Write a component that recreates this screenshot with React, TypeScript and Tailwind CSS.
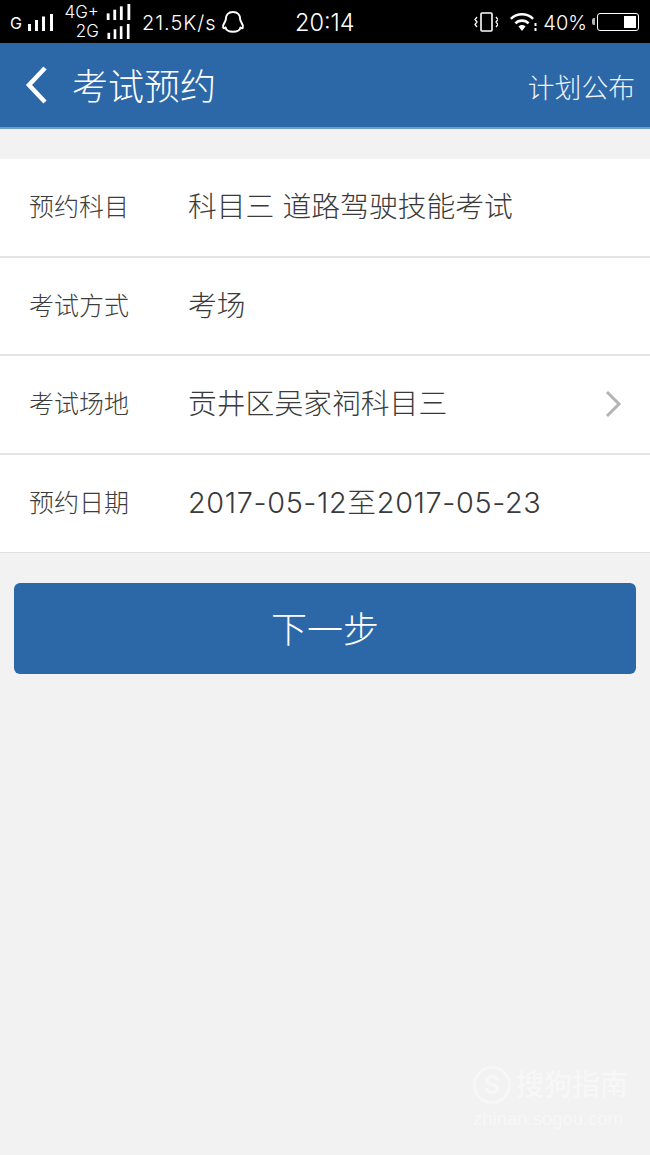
const font = { fontFamily: 'Inter, "Noto Sans CJK SC", sans-serif' };

function Bars({ className }: { className?: string }) {
  // signal strength bars, rising left to right
  return (
    <svg width="25" height="17" viewBox="0 0 25 17" className={className} fill="white">
      <rect x="0" y="10" width="3" height="7" />
      <rect x="7" y="6" width="3" height="11" />
      <rect x="14" y="2.5" width="3" height="14.5" />
      <rect x="22" y="0" width="3" height="17" />
    </svg>
  );
}

function Qq() {
  return (
    <svg width="24" height="24" viewBox="0 0 24 24" fill="none" stroke="white" strokeWidth="2" strokeLinejoin="round">
      <path d="M12 2c-4.800 0-7.200 3.300-7.200 7.200 0 1.300-.5 2.200-1.300 3.400-1 1.500-1.800 3.200-1.300 5 .3 1 1.100.8 2.300-.2.300 2.200 3 4.400 7.500 4.400s7.200-2.200 7.500-4.400c1.200 1 2 1.200 2.300.2.500-1.800-.3-3.500-1.300-5-.8-1.200-1.300-2.100-1.300-3.400C19.200 5.300 16.800 2 12 2z" />
    </svg>
  );
}

function StatusBar() {
  return (
    <div className="h-[43px] bg-black text-white flex items-center" style={font}>
      <div className="flex items-center w-[295px] pl-[10px]">
        <span className="text-[16px] leading-none mr-[6px] mt-[3px]">G</span>
        <Bars className="mt-[1px]" />
        <div className="ml-[10px] w-[68px] flex flex-col items-end">
          <div className="flex items-center gap-[7px] h-[19px]">
            <span className="text-[17px] leading-none font-light">4G+</span>
            <Bars className="h-[16px]" />
          </div>
          <div className="flex items-center gap-[7px] h-[19px]">
            <span className="text-[17px] leading-none font-light">2G</span>
            <Bars className="h-[15px]" />
          </div>
        </div>
        <span className="ml-[11px] mt-[2px] text-[20px] tracking-[1px] leading-none font-light">21.5K/s</span>
        <span className="ml-[4px]"><Qq /></span>
      </div>
      <span className="mt-[3px] text-[23.500px] leading-none font-light">20:14</span>
      <div className="ml-auto flex items-center pr-[11px]">
        <svg width="24" height="22" viewBox="0 0 24 22" fill="none" stroke="white" strokeWidth="1.600">
          <rect x="7" y="2" width="11" height="18" rx="1" />
          <path d="M3 6l-2 2.500 2 2.500-2 2.500 2 2.500M22 6l2 2.500-2 2.500 2 2.500-2 2.500" strokeWidth="1.300" />
        </svg>
        <svg width="28" height="22" viewBox="0 0 28 22" fill="white" className="ml-[11px]">
          <path d="M1 7a17 17 0 0 1 24 0l-1.800 1.800a14.500 14.500 0 0 0-20.400 0z" />
          <path d="M5.500 11.500a10.500 10.500 0 0 1 15 0l-1.800 1.800a8 8 0 0 0-11.400 0z" />
          <path d="M9.500 15.500a5 5 0 0 1 7 0L13 20z" />
          <rect x="25.500" y="12" width="2" height="3" />
          <rect x="25.500" y="17" width="2" height="3" />
        </svg>
        <span className="mt-[2px] text-[20px] leading-none ml-[6px] font-light">40%</span>
        <div className="ml-[5px] w-[3px] h-[7px] bg-white/70 rounded-l-[2px]" />
        <div className="ml-[2px] w-[42px] h-[18px] rounded-[3px] border border-white flex justify-end p-[2px]">
          <div className="w-[12px] bg-white" />
        </div>
      </div>
    </div>
  );
}

function Row({ label, value, arrow, line = true, wide }: { label: string; value: string; arrow?: boolean; line?: boolean; wide?: boolean }) {
  return (
    <div className={`flex items-center h-[98.500px] pl-[29px] pr-[28px] ${line ? 'border-b-2 border-[#e4e4e4]' : 'border-b border-[#e0e0e0]'}`}>
      <span className="w-[159px] mt-[1px] text-[25px] leading-none text-[#3d3d3d] font-light">{label}</span>
      <span className={`flex-1 mt-[1px] text-[28.800px] leading-none text-[#3a3a3a] font-light ${wide ? 'tracking-[0.65px]' : ''}`}>{value}</span>
      {arrow && (
        <svg width="17" height="28" viewBox="0 0 17 28" fill="none" stroke="#b4b4b4" strokeWidth="3">
          <path d="M2 2l12 12L2 26" />
        </svg>
      )}
    </div>
  );
}

export default function App() {
  return (
    <div className="w-[650px] h-[1155px] bg-[#f2f2f2] flex flex-col overflow-hidden relative" style={font}>
      <StatusBar />
      <div className="h-[86px] bg-[#2c67a8] border-b-2 border-[#6f9bc9] flex items-center pl-[25px] pr-[15px] text-white">
        <svg width="24" height="38" viewBox="0 0 24 38" fill="none" stroke="white" strokeWidth="4.500">
          <path d="M20 2L4 19l16 17" />
        </svg>
        <span className="ml-[23px] mt-[3px] text-[36px] leading-none font-light">考试预约</span>
        <span className="ml-auto mt-[6px] text-[26.800px] leading-none text-[#eef3f9] font-light">计划公布</span>
      </div>
      <div className="mt-[30px] bg-white">
        <Row label="预约科目" value="科目三 道路驾驶技能考试" />
        <Row label="考试方式" value="考场" />
        <Row label="考试场地" value="贡井区吴家祠科目三" arrow />
        <Row label="预约日期" value="2017-05-12至2017-05-23" line={false} wide />
      </div>
      <div className="mt-[30px] mx-[14px] h-[91px] pt-[2px] rounded-[6px] bg-[#2c67a8] flex items-center justify-center text-white text-[36px] leading-none font-light">
        下一步
      </div>
      {/* watermark */}
      <div className="absolute left-[473px] top-[1066px] w-[155px] text-[#f7f7f7]">
        <div className="flex items-center gap-[5px]">
          <span className="w-[38px] h-[38px] rounded-full border-[3px] border-[#f7f7f7] flex items-center justify-center text-[25px] leading-none font-bold">S</span>
          <span className="text-[28px] leading-none font-medium">搜狗指南</span>
        </div>
        <div className="mt-[6px] text-[18.500px] leading-none whitespace-nowrap" style={{ fontFamily: '"Liberation Sans", sans-serif' }}>zhinan.sogou.com</div>
      </div>
    </div>
  );
}
